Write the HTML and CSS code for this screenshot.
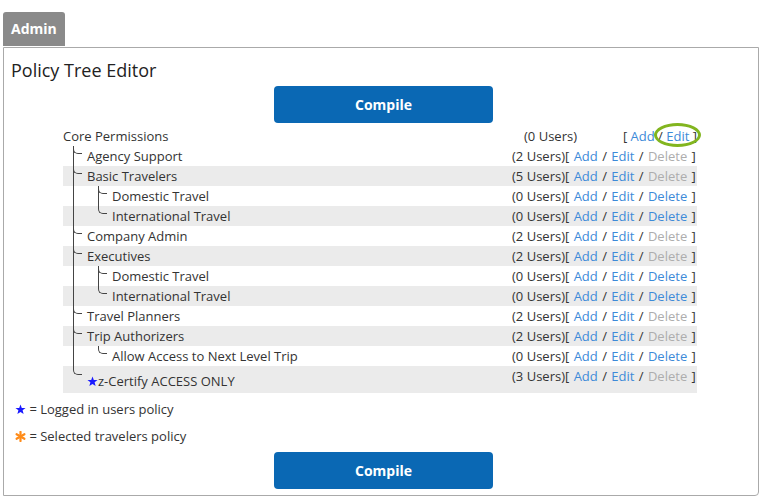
FILE: index.html
```html
<!DOCTYPE html>
<html lang="en">
<head>
    <meta charset="UTF-8">
    <title>Policy Tree Editor</title>
    <link rel="stylesheet" href="styles.css">
</head>
<body>
    <div class="tab">Admin</div>
    <div class="panel">
        <h2 class="title">Policy Tree Editor</h2>
        <button class="compile">Compile</button>

        <div class="tree">
            <div class="row root">
                <div class="label">Core Permissions</div>
                <div class="users">(0 Users)</div>
                <div class="actions">[ <a>Add</a> / <span class="marked"><a>Edit</a></span> ]</div>
            </div>
            <div class="row">
                <div class="label"><span class="guide tee"></span>Agency Support</div>
                <div class="users">(2 Users)</div>
                <div class="actions">[ <a>Add</a> / <a>Edit</a> / <a class="off">Delete</a> ]</div>
            </div>
            <div class="row alt">
                <div class="label"><span class="guide tee"></span>Basic Travelers</div>
                <div class="users">(5 Users)</div>
                <div class="actions">[ <a>Add</a> / <a>Edit</a> / <a class="off">Delete</a> ]</div>
            </div>
            <div class="row">
                <div class="label"><span class="guide pipe"></span><span class="guide tee"></span>Domestic Travel</div>
                <div class="users">(0 Users)</div>
                <div class="actions">[ <a>Add</a> / <a>Edit</a> / <a>Delete</a> ]</div>
            </div>
            <div class="row alt">
                <div class="label"><span class="guide pipe"></span><span class="guide elbow"></span>International Travel</div>
                <div class="users">(0 Users)</div>
                <div class="actions">[ <a>Add</a> / <a>Edit</a> / <a>Delete</a> ]</div>
            </div>
            <div class="row">
                <div class="label"><span class="guide tee"></span>Company Admin</div>
                <div class="users">(2 Users)</div>
                <div class="actions">[ <a>Add</a> / <a>Edit</a> / <a class="off">Delete</a> ]</div>
            </div>
            <div class="row alt">
                <div class="label"><span class="guide tee"></span>Executives</div>
                <div class="users">(2 Users)</div>
                <div class="actions">[ <a>Add</a> / <a>Edit</a> / <a class="off">Delete</a> ]</div>
            </div>
            <div class="row">
                <div class="label"><span class="guide pipe"></span><span class="guide tee"></span>Domestic Travel</div>
                <div class="users">(0 Users)</div>
                <div class="actions">[ <a>Add</a> / <a>Edit</a> / <a>Delete</a> ]</div>
            </div>
            <div class="row alt">
                <div class="label"><span class="guide pipe"></span><span class="guide elbow"></span>International Travel</div>
                <div class="users">(0 Users)</div>
                <div class="actions">[ <a>Add</a> / <a>Edit</a> / <a>Delete</a> ]</div>
            </div>
            <div class="row">
                <div class="label"><span class="guide tee"></span>Travel Planners</div>
                <div class="users">(2 Users)</div>
                <div class="actions">[ <a>Add</a> / <a>Edit</a> / <a class="off">Delete</a> ]</div>
            </div>
            <div class="row alt">
                <div class="label"><span class="guide tee"></span>Trip Authorizers</div>
                <div class="users">(2 Users)</div>
                <div class="actions">[ <a>Add</a> / <a>Edit</a> / <a class="off">Delete</a> ]</div>
            </div>
            <div class="row">
                <div class="label"><span class="guide pipe"></span><span class="guide elbow"></span>Allow Access to Next Level Trip</div>
                <div class="users">(0 Users)</div>
                <div class="actions">[ <a>Add</a> / <a>Edit</a> / <a>Delete</a> ]</div>
            </div>
            <div class="row alt last">
                <div class="label"><span class="guide elbow"></span><span class="name">
                    <svg class="star" viewBox="0 0 12 12"><polygon points="6,0.5 7.4,4.3 11.5,4.4 8.3,6.9 9.4,11 6,8.6 2.6,11 3.7,6.9 0.5,4.4 4.6,4.3" fill="#1a1aff"/></svg>z-Certify ACCESS ONLY</span></div>
                <div class="users">(3 Users)</div>
                <div class="actions">[ <a>Add</a> / <a>Edit</a> / <a class="off">Delete</a> ]</div>
            </div>
        </div>

        <div class="legend">
            <div class="legend-item">
                <svg class="star" viewBox="0 0 12 12"><polygon points="6,0.5 7.4,4.3 11.5,4.4 8.3,6.9 9.4,11 6,8.6 2.6,11 3.7,6.9 0.5,4.4 4.6,4.3" fill="#1a1aff"/></svg>
                = Logged in users policy
            </div>
            <div class="legend-item">
                <svg class="star" viewBox="0 0 12 12"><g stroke="#ff8c1a" stroke-width="2.4" stroke-linecap="round"><line x1="6" y1="1" x2="6" y2="11"/><line x1="1.7" y1="3.5" x2="10.3" y2="8.5"/><line x1="1.7" y1="8.5" x2="10.3" y2="3.5"/></g></svg>
                = Selected travelers policy
            </div>
        </div>

        <button class="compile">Compile</button>
    </div>
</body>
</html>
```

FILE: styles.css
```css
body {
    margin: 0;
    padding: 12px 0 0 3px;
    font-family: 'Open Sans', 'Liberation Sans', sans-serif;
    font-size: 13px;
    color: #333;
    background-color: #fff;
}
.tab {
    width: 62px;
    height: 34px;
    line-height: 34px;
    box-sizing: border-box;
    padding-left: 8px;
    margin-bottom: 1px;
    background-color: #8a8a8a;
    color: #fff;
    font-weight: bold;
    font-size: 14px;
    border-radius: 3px 3px 0 0;
}
.panel {
    width: 756px;
    height: 449px;
    box-sizing: border-box;
    border: 1px solid #aaa;
    border-radius: 0 0 4px 0;
    padding: 10px 7px 0 7px;
}
.title {
    margin: 0;
    font-size: 18px;
    font-weight: normal;
    line-height: 24px;
    color: #222;
}
.compile {
    display: block;
    width: 219px;
    height: 37px;
    margin: 4px 0 0 263px;
    border: none;
    border-radius: 4px;
    background-color: #0a68b4;
    color: #fff;
    font-family: 'Open Sans', 'Liberation Sans', sans-serif;
    font-size: 14px;
    font-weight: bold;
}
.tree {
    width: 634px;
    margin: 3px 0 0 52px;
}
.row {
    display: flex;
    height: 20px;
    line-height: 20px;
}
.row.root {
    line-height: 21px;
}
.row.alt {
    background-color: #ebebeb;
}
.row.last {
    height: 27px;
}
.label {
    flex: 1;
    display: flex;
    white-space: nowrap;
}
.row.last .name {
    padding-top: 5px;
}
.users {
    white-space: nowrap;
}
.actions {
    width: 132px;
    white-space: nowrap;
    word-spacing: 1px;
}
.row.root .users {
    margin-right: -12px;
}
.row.root .actions {
    text-align: right;
    word-spacing: 0;
}
.actions a {
    color: #3d8ad8;
}
.actions a.off {
    color: #adadad;
}
.marked {
    position: relative;
}
.marked::after {
    content: '';
    position: absolute;
    left: -12px;
    top: -4px;
    width: 41px;
    height: 18px;
    border: 3px solid #82b51f;
    border-radius: 50%;
}

/* tree connectors */
.guide {
    position: relative;
    width: 24px;
    flex: none;
}
.guide.pipe::before,
.guide.tee::before {
    content: '';
    position: absolute;
    left: 10px;
    top: 0;
    bottom: 0;
    border-left: 1px solid #444;
}
.guide.tee::after,
.guide.elbow::after {
    content: '';
    position: absolute;
    left: 10px;
    top: 0;
    width: 8px;
    height: 7px;
    border-left: 1px solid #444;
    border-bottom: 1px solid #444;
    border-bottom-left-radius: 5px;
}
.row.last .guide.elbow::after {
    height: 8px;
}
.guide + .guide {
    width: 25px;
}
.guide + .guide::before,
.guide + .guide::after {
    left: 11px;
}
.star {
    width: 11px;
    height: 11px;
    vertical-align: -1px;
}
.legend {
    margin-top: 6px;
    padding-left: 4px;
}
.legend-item {
    line-height: 20px;
    margin-bottom: 7px;
}
.legend + .compile {
    margin-top: -1px;
}
```
